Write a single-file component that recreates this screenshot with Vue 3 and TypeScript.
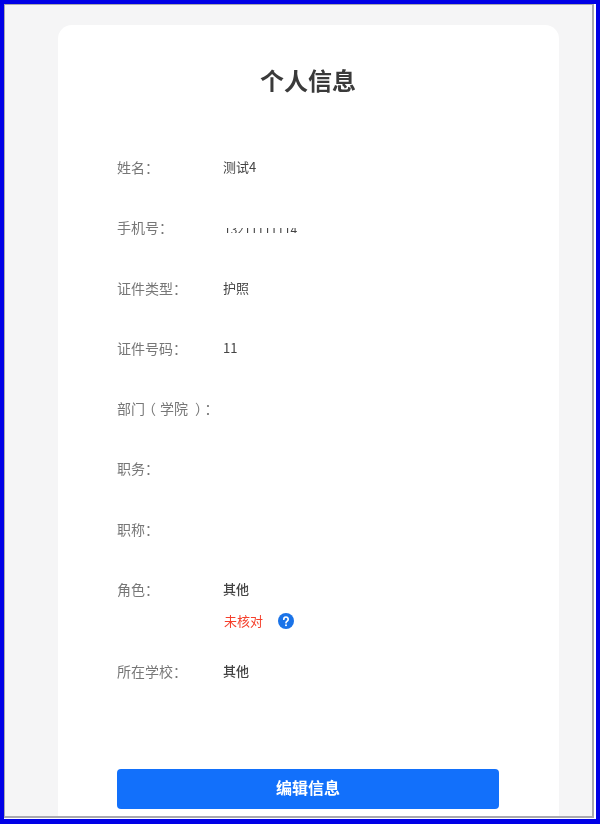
<script setup lang="ts">
interface Row { label: string; value?: string; }
const rows: Row[] = [
  { label: '姓名：', value: '测试4' },
  { label: '手机号：', value: '13211111114' },
  { label: '证件类型：', value: '护照' },
  { label: '证件号码：', value: '11' },
  { label: '部门（学院）：' },
  { label: '职务：' },
  { label: '职称：' },
];
</script>

<template>
  <div class="frame">
    <div class="screen">
      <main class="card">
        <h1 class="title">个人信息</h1>
        <div class="list">
          <div v-for="r in rows" :key="r.label" class="row">
            <span v-if="r.label.includes('（')" class="label">部门<span class="open">（</span><span class="mid">学院</span><span class="close">）</span>：</span>
            <span v-else class="label">{{ r.label }}</span>
            <span class="value" :class="{ clipped: r.label === '手机号：' }"><span class="inner">{{ r.value }}</span></span>
          </div>
          <div class="row role">
            <span class="label">角色：</span>
            <div class="stack">
              <span class="value strong">其他</span>
              <div class="status">
                <span class="warn">未核对</span>
                <svg class="help" viewBox="0 0 16 16" width="16" height="16" aria-hidden="true">
                  <circle cx="8" cy="8" r="8" fill="#1a73e8" />
                  <path d="M5.8 6.2a2.2 2.2 0 1 1 3.5 1.8c-.8.5-1.3.9-1.3 1.7" fill="none" stroke="#fff" stroke-width="1.7" stroke-linecap="round" />
                  <circle cx="8" cy="12.2" r="1" fill="#fff" />
                </svg>
              </div>
            </div>
          </div>
          <div class="row">
            <span class="label">所在学校：</span>
            <span class="value strong">其他</span>
          </div>
        </div>
        <button class="edit" type="button">编辑信息</button>
      </main>
    </div>
  </div>
</template>

<style>
html, body { margin: 0; padding: 0; background: #fff; }
</style>

<style scoped>
.frame {
  box-sizing: border-box;
  width: 600px;
  height: 824px;
  overflow: hidden;
  border: 4px solid #0000e6;
  border-bottom-width: 5px;
  background: #fff;
  padding: 0 2px 1px 0;
  font-family: "Noto Sans CJK SC", "Liberation Sans", sans-serif;
}
.screen {
  box-sizing: border-box;
  height: 100%;
  border: 1px solid #a8a8b0;
  border-width: 1px 2px 2px 1px;
  background: #f5f5f6;
  padding: 20px 33px 0 53px;
  overflow: hidden;
}
.card {
  background: #fff;
  border-radius: 14px 14px 0 0;
  height: 800px;
  padding: 0 60px 0 59px;
  box-sizing: border-box;
  filter: blur(0.5px);
}
.title {
  margin: 0;
  padding-top: 36px;
  height: 112px;
  box-sizing: border-box;
  text-align: center;
  font-size: 24px;
  line-height: 38px;
  font-weight: 700;
  color: #3a3a3a;
}
.list { display: flex; flex-direction: column; }
.row {
  display: flex;
  height: 60.3px;
  font-size: 14px;
  line-height: 20px;
  padding-top: 20px;
  box-sizing: border-box;
}
.row.role { height: 82px; }
.label { width: 106px; flex: none; color: #777; white-space: nowrap; text-spacing-trim: space-all; }
.open { margin-left: -3px; }
.mid { margin-left: 4px; }
.close { margin-left: 7px; margin-right: -4.5px; }
.value { color: #444; font-size: 13px; }
.strong { font-weight: 500; }
.clipped {
  display: block;
  height: 5.5px;
  margin: 10.7px 0 0 1px;
  overflow: hidden;
  font-size: 12px;
}
.clipped .inner { display: block; margin-top: -9px; }
.stack { display: flex; flex-direction: column; gap: 12px; }
.status { display: flex; align-items: center; gap: 15px; height: 20px; padding-left: 1px; }
.warn { color: #f5402c; font-size: 13px; }
.help { flex: none; }
.edit {
  display: block;
  width: 382px;
  height: 40px;
  margin-top: 67.5px;
  padding: 0 0 3px;
  border: 0;
  border-radius: 4px;
  background: #1270fb;
  color: #fff;
  font: 700 16px "Noto Sans CJK SC", "Liberation Sans", sans-serif;
}
</style>
